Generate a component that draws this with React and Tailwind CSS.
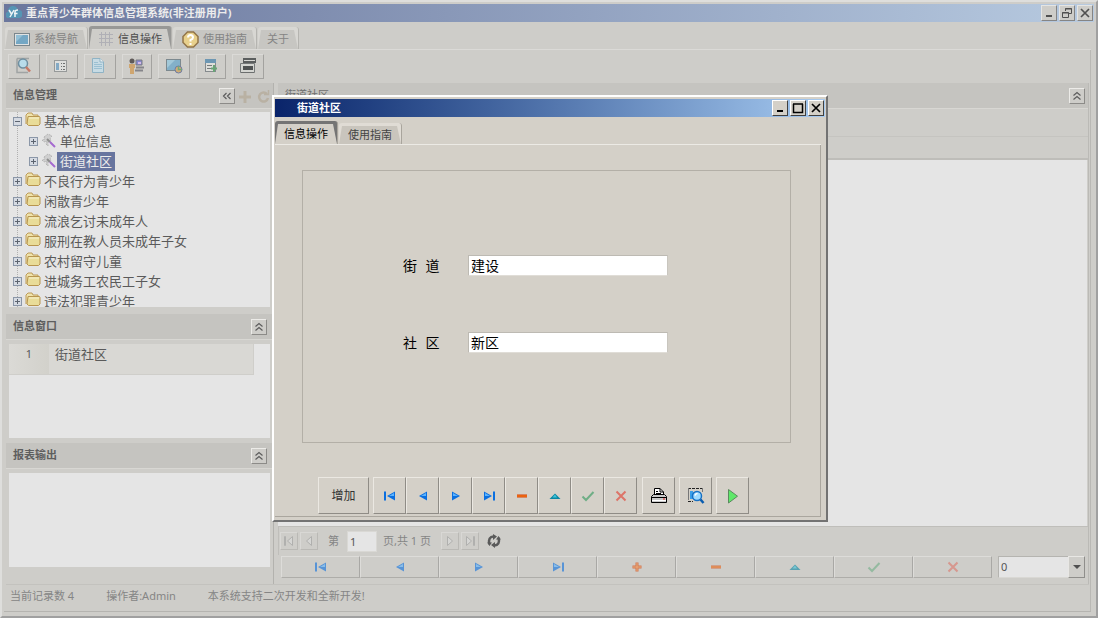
import { useState } from "react";
import clsx from "clsx";

const TREE = [
  { label: "基本信息", level: 0, open: true },
  { label: "单位信息", level: 1 },
  { label: "街道社区", level: 1 },
  { label: "不良行为青少年", level: 0 },
  { label: "闲散青少年", level: 0 },
  { label: "流浪乞讨未成年人", level: 0 },
  { label: "服刑在教人员未成年子女", level: 0 },
  { label: "农村留守儿童", level: 0 },
  { label: "进城务工农民工子女", level: 0 },
  { label: "违法犯罪青少年", level: 0 },
];

const NAV_MAIN = ["first", "prev", "next", "last", "plus", "minus", "up", "check", "cross"];
const NAV_DIALOG = ["first", "prev", "next", "last", "minus", "up", "check", "cross"];

const NAV_LABELS = {
  first: "首记录",
  prev: "上一条",
  next: "下一条",
  last: "末记录",
  plus: "新增",
  minus: "删除",
  up: "编辑",
  check: "保存",
  cross: "取消",
};

function NavIcon({ name }) {
  return (
    <svg width="14" height="14" viewBox="0 0 14 14">
      {name === "first" && (
        <>
          <path d="M1 2.5h2v9H1z" fill="#0a6fe0" />
          <path d="M12 2.5v9L4 7z" fill="#0a6fe0" />
          <path d="M11 4v3H6z" fill="#5cb4ff" />
        </>
      )}
      {name === "prev" && (
        <>
          <path d="M11 2.5v9L3 7z" fill="#0a6fe0" />
          <path d="M10 4v3H5z" fill="#5cb4ff" />
        </>
      )}
      {name === "next" && (
        <>
          <path d="M3 2.5v9L11 7z" fill="#0a6fe0" />
          <path d="M4 4v3h5z" fill="#5cb4ff" />
        </>
      )}
      {name === "last" && (
        <>
          <path d="M11 2.5h2v9h-2z" fill="#0a6fe0" />
          <path d="M2 2.5v9L10 7z" fill="#0a6fe0" />
          <path d="M3 4v3h5z" fill="#5cb4ff" />
        </>
      )}
      {name === "plus" && (
        <>
          <path d="M2.500 5.500h3v-3h3v3h3v3h-3v3h-3v-3h-3z" fill="#d63c00" />
          <path d="M3 7h8M7 3v8" stroke="#ff9a4a" />
        </>
      )}
      {name === "minus" && (
        <>
          <path d="M2 5.500h10v3H2z" fill="#d63c00" />
          <path d="M2 7h10" stroke="#ff8a1e" />
        </>
      )}
      {name === "up" && (
        <>
          <path d="M1.500 10L7 4.500l5.500 5.500z" fill="#0b87a3" />
          <path d="M4.500 8.500L7 5.500l2 3z" fill="#3fc6dc" />
        </>
      )}
      {name === "check" && <path d="M1.500 7.500L5 11L12.500 3" fill="none" stroke="#6fae86" strokeWidth="2" />}
      {name === "cross" && <path d="M2.500 2.500l9 9M11.500 2.500l-9 9" fill="none" stroke="#dd7468" strokeWidth="2" />}
    </svg>
  );
}

function Folder() {
  return (
    <svg width="16" height="15" viewBox="0 0 16 15" className="mb-[3px] shrink-0">
      <path d="M1 12V3l2-2h4l1 2h5v2" fill="#efe3ac" stroke="#bd9b58" />
      <path d="M3 4.500h11.500l.5 1V12l-1.500 1.500h-10L2 12z" fill="#e9dc98" stroke="#b8954f" />
      <path d="M4 6h10" stroke="#f7f1cf" />
    </svg>
  );
}

function Wand() {
  return (
    <svg width="16" height="16" viewBox="0 0 16 16" className="shrink-0">
      <path d="M3 4l4-3 4 2-2 2 1 3-3 1v4l-2-2 1-3-3 1-2-2 3-1z" fill="#cfcfcf" stroke="#b5b5b5" strokeDasharray="2 1" />
      <path d="M6 6l3 3" stroke="#8d8d8d" strokeWidth="2" />
      <path d="M9 9l5 5" stroke="#a56ad0" strokeWidth="2" />
    </svg>
  );
}

function Expander({ open }) {
  return (
    <svg width="9" height="9" viewBox="0 0 9 9" className="shrink-0" shapeRendering="crispEdges">
      <rect x=".5" y=".5" width="8" height="8" fill="#d5dae2" stroke="#8b97a8" />
      <path d={open ? "M2 4.500h5" : "M2 4.500h5M4.500 2v5"} stroke="#5c6470" />
    </svg>
  );
}

function MonitorIcon() {
  return (
    <svg width="16" height="14" viewBox="0 0 16 14">
      <rect x=".5" y=".5" width="15" height="12" fill="#e0e2e2" stroke="#7a868c" />
      <rect x="2" y="2" width="12" height="9" fill="#74a7c4" />
      <path d="M2 2h7L2 9z" fill="#94c0d6" />
    </svg>
  );
}

function GridIcon() {
  return (
    <svg width="16" height="14" viewBox="0 0 16 14" shapeRendering="crispEdges">
      <path
        d="M3.500 0v14M7.500 0v14M11.500 0v14M1 2.500h14M1 6.500h14M1 10.500h14"
        stroke="#b0b0b6"
      />
    </svg>
  );
}

function HelpIcon() {
  return (
    <svg width="17" height="17" viewBox="0 0 17 17">
      <path d="M5.500 1h6L16 5.500v6L11.500 16h-6L1 11.500v-6z" fill="#e8d08c" stroke="#927549" strokeWidth="1.500" />
      <path d="M6 6.500Q6 4 8.500 4T11 6.500Q11 8 8.500 9v1.500" fill="none" stroke="#fff" strokeWidth="2" />
      <path d="M7.500 12h2v2h-2z" fill="#fff" />
    </svg>
  );
}

function ToolIcon({ name }) {
  return (
    <svg width="18" height="18" viewBox="0 0 18 18">
      {name === "search" && (
        <>
          <path d="M2 1.500h12M2 1.500v14h11" fill="none" stroke="#a0a4a4" strokeWidth="1.500" />
          <circle cx="8" cy="6.500" r="4.500" fill="#b9dcea" stroke="#6f8fa0" strokeWidth="1.500" />
          <path d="M11 10l4 4.500" stroke="#c57a68" strokeWidth="2.500" />
        </>
      )}
      {name === "form" && (
        <>
          <rect x="1.500" y="3.500" width="12" height="11" fill="#dedfdd" stroke="#969999" />
          <path d="M3 6h3v7H3z" fill="#83a9c4" />
          <path d="M8 6.500h1M8 9.500h1M8 12.500h1M10 6.500h2M10 9.500h2M10 12.500h2" stroke="#6d7070" />
        </>
      )}
      {name === "page" && (
        <>
          <path d="M1.500 1.500H9L12.500 5v10.500h-11z" fill="#c7dbe4" stroke="#8fb3c5" />
          <path d="M9 1.500V5h3.500" fill="#eef2f4" stroke="#8fb3c5" />
          <path d="M3 5.500h4M3 7.500h8M3 9.500h8M3 11.500h8" stroke="#9bc0d2" />
        </>
      )}
      {name === "user" && (
        <>
          <circle cx="4" cy="4" r="2.500" fill="#5f5a58" />
          <path d="M1 7h6v4H6v6H2v-6H1z" fill="#cfa670" />
          <path d="M8 3h6v5H8z" fill="#8689cf" stroke="#7c7c82" />
          <path d="M8 10.500h8M7 13.500h8" stroke="#85858a" strokeWidth="2" />
          <path d="M10 5h3v2h-3z" fill="#d5b8e6" />
        </>
      )}
      {name === "screen" && (
        <>
          <rect x="1.500" y="2.500" width="14" height="11" fill="#83b0c8" stroke="#7c898f" />
          <path d="M2 3h8L2 11z" fill="#a2c8d8" />
          <circle cx="13.500" cy="12.500" r="3.500" fill="#d1ad76" stroke="#6c7ba6" />
          <path d="M13.500 9v3.500H17" stroke="#72a978" strokeWidth="1.500" fill="none" />
        </>
      )}
      {name === "sheet" && (
        <>
          <rect x="3.500" y="2.500" width="10" height="12" fill="#dededa" stroke="#858a8d" />
          <path d="M3 2h11v4H3z" fill="#6d97b3" />
          <path d="M5 8.500h5M5 11.500h5" stroke="#777b7b" />
          <path d="M12 8v7M9 11.500h6" stroke="#69a476" strokeWidth="2" />
        </>
      )}
      {name === "printer" && (
        <>
          <path d="M4 1h13v5H4z" fill="#5b5e5e" />
          <path d="M5 3.500h11" stroke="#d8d8d4" />
          <path d="M1.500 6.500h14v9h-14z" fill="#d4d5d1" stroke="#777a7a" />
          <path d="M4 9h10v4H4z" fill="#4f5252" />
          <path d="M2 15.500h13" stroke="#6c6e6e" />
        </>
      )}
    </svg>
  );
}

const TOOLS = [
  { name: "search", label: "查询", wide: true },
  { name: "form", label: "表单", wide: true },
  { name: "page", label: "文档", wide: true },
  { name: "user", label: "用户", wide: false },
  { name: "screen", label: "网络", wide: true },
  { name: "sheet", label: "导出", wide: false },
  { name: "printer", label: "打印", wide: true },
];

function Chevrons({ left }) {
  return (
    <svg width="10" height="10" viewBox="0 0 10 10" fill="none" stroke="#5c5c5c" strokeWidth="1.200">
      {left ? <path d="M4.500 2L1.500 5l3 3M8.500 2l-3 3 3 3" /> : <path d="M1.500 4.500L5 1.500l3.500 3M1.500 8.500L5 5.500l3.500 3" />}
    </svg>
  );
}

function ChevronButton({ left, label }) {
  return (
    <button
      type="button"
      aria-label={label}
      className="flex h-4 w-4 items-center justify-center border border-t-[#ecebe8] border-r-[#8c8b88] border-b-[#8c8b88] border-l-[#ecebe8] bg-[#cecdc9]"
    >
      <Chevrons left={left} />
    </button>
  );
}

function PanelHeader({ title, children }) {
  return (
    <div className="flex h-[26px] shrink-0 items-center border-b border-[#d8d7d3] bg-[#c5c4c0] pr-[6px] pl-[7px]">
      <h2 className="flex-1 text-[11px] font-bold text-[#5e5e5e]">{title}</h2>
      {children}
    </div>
  );
}

function Tab({ active, dialog, icon, children }) {
  return (
    <button
      type="button"
      role="tab"
      aria-selected={active}
      className={clsx(
        "rounded-t-[3px] border-r pt-[3px] text-[11px]",
        dialog ? "border-[#a9a59d]" : "border-[#b5b4b0]",
        active && dialog && "h-[23px] bg-[#747474] text-black",
        active && !dialog && "h-[23px] bg-[#989896] text-[#4c4c4c]",
        !active && dialog && "h-[21px] bg-[#e0dcd5] text-[#444]",
        !active && !dialog && "h-[22px] bg-[#d8d7d3] text-[#848484]",
      )}
    >
      <span
        className={clsx(
          "flex h-full items-center gap-1 px-[9px] [clip-path:polygon(3px_0,calc(100%-4px)_0,100%_100%,0_100%)]",
          active && dialog && "bg-[#d4d0c8]",
          active && !dialog && "bg-[#cecdc9]",
          !active && dialog && "bg-[#c9c5bd]",
          !active && !dialog && "bg-[#c7c6c2]",
        )}
      >
        {icon}
        {children}
      </span>
    </button>
  );
}

function CaptionButton({ kind, dim }) {
  return (
    <button
      type="button"
      aria-label={kind}
      className={clsx(
        "flex h-4 w-4 items-center justify-center border",
        dim
          ? "border-t-[#e5e5e3] border-r-[#858585] border-b-[#858585] border-l-[#e5e5e3] bg-[#cecdc9] text-[#505050]"
          : "border-t-white border-r-[#404040] border-b-[#404040] border-l-white bg-[#d4d0c8] text-black",
      )}
    >
      <svg width="12" height="12" viewBox="0 0 12 12" fill="none" stroke="currentColor">
        {kind === "minimize" && <path d="M3 9h6" strokeWidth="2" />}
        {kind === "maximize" && <path d="M1.500 2v8.500h9V2M1 2h10" strokeWidth="1.500" />}
        {kind === "restore" && <path d="M4.500 4V1.500h6v5H8M4 2h7M1.500 5.500h6v5h-6zM1 6h7" />}
        {kind === "close" && <path d="M2 2l8 8M10 2l-8 8" strokeWidth="1.700" />}
      </svg>
    </button>
  );
}

function TreePanel({ selected, onSelect }) {
  return (
    <ul className="relative mx-[3px] mt-[3px] min-h-0 flex-1 overflow-hidden bg-[#e5e5e5] text-[13px] text-[#5a5a5a]">
      <li className="absolute top-0 left-2 h-full border-l border-dotted border-[#b0b0b0]" aria-hidden="true" />
      {TREE.map((node) => (
        <li
          key={node.label}
          className={clsx("relative flex h-5 items-center gap-[3px] pb-[2px]", node.level ? "pl-5" : "pl-1")}
        >
          <Expander open={node.open} />
          {node.level ? <Wand /> : <Folder />}
          <button
            type="button"
            onClick={() => onSelect(node.label)}
            className={clsx(
              "h-[19px] leading-[19px]",
              node.level && "-ml-[3px] px-[3px]",
              selected === node.label && "bg-[#68759f] text-[#ececec]",
            )}
          >
            {node.label}
          </button>
        </li>
      ))}
    </ul>
  );
}

function Sidebar() {
  const [selected, setSelected] = useState("街道社区");

  return (
    <aside className="flex w-[268px] shrink-0 flex-col border-r border-[#b3b2ae] pb-[17px]">
      <PanelHeader title="信息管理">
        <ChevronButton left label="折叠" />
        <svg width="36" height="16" viewBox="0 0 36 16" className="-mr-1" fill="none" stroke="#b9b1a3">
          <path d="M4 9h12M10 3v12" strokeWidth="3" />
          <path d="M32 6a4.500 4.500 0 1 0 1 4" strokeWidth="2.500" />
          <path d="M29 6.500h4.500V2" strokeWidth="1.500" />
        </svg>
      </PanelHeader>
      <TreePanel selected={selected} onSelect={setSelected} />

      <div className="mt-[7px] mb-1">
        <PanelHeader title="信息窗口">
          <ChevronButton label="收起信息窗口" />
        </PanelHeader>
      </div>
      <div className="mx-[3px] h-[94px] shrink-0 bg-[#e5e5e5] pr-4">
        <table className="w-full border-r border-b border-[#cfceca] text-[#5a5a5a]">
          <tbody>
            <tr className="h-[30px] bg-[#d9d8d4] align-top">
              <td className="w-10 bg-gradient-to-r from-[#dbdad6] to-[#d2d1cb] pt-[2px] text-center text-[11px]">1</td>
              <td className="pl-[6px] text-[13px] leading-[20px]">{selected}</td>
            </tr>
          </tbody>
        </table>
      </div>

      <div className="mt-[5px] mb-1">
        <PanelHeader title="报表输出">
          <ChevronButton label="收起报表输出" />
        </PanelHeader>
      </div>
      <div className="mx-[3px] h-[94px] shrink-0 bg-[#e5e5e5]" />
    </aside>
  );
}

function PagerButton({ name, label }) {
  return (
    <button
      type="button"
      aria-label={label}
      className="flex h-[18px] w-[18px] items-center justify-center border border-t-[#d9d8d5] border-r-[#bab9b5] border-b-[#bab9b5] border-l-[#d9d8d5]"
    >
      <svg width="12" height="12" viewBox="0 0 12 12" fill="#d6d6d4" stroke="#b0b0ae">
        {name === "first" && <path d="M1.500 1.500h1v9h-1zM9.500 1.500v9L4.500 6z" />}
        {name === "prev" && <path d="M8.500 1.500v9L3.500 6z" />}
        {name === "next" && <path d="M3.500 1.500v9l5-4.500z" />}
        {name === "last" && <path d="M9.500 1.500h1v9h-1zM2.500 1.500v9l5-4.500z" />}
      </svg>
    </button>
  );
}

function Pager() {
  return (
    <div className="flex h-[29px] items-center border-t border-l border-[#bfbeba] pl-px text-[11px] text-[#858585]">
      <div className="flex gap-[2px]">
        <PagerButton name="first" label="首页" />
        <PagerButton name="prev" label="上一页" />
      </div>
      <label htmlFor="page" className="ml-[10px]">
        第
      </label>
      <input
        id="page"
        defaultValue="1"
        className="mr-[6px] ml-2 h-[21px] w-[30px] border border-[#d9d8d4] bg-[#e5e5e5] px-[2px] text-[11px] text-[#555]"
      />
      <span>页,共 1 页</span>
      <div className="ml-[10px] flex gap-[2px]">
        <PagerButton name="next" label="下一页" />
        <PagerButton name="last" label="尾页" />
      </div>
      <button type="button" aria-label="刷新" className="ml-2">
        <svg width="14" height="14" viewBox="0 0 14 14" fill="none" stroke="#5a5a5a" strokeWidth="2.500">
          <path d="M6.500 2.500C3 2.500 1 5.500 2.500 10" />
          <path d="M7.500 11.500c3.500 0 5.500-3 4-7.500" />
          <path d="M6 0v6l4-3.500zM8 8v6l-4-3zM0 8.500h5L2.500 12zM9 5.500h5L11.500 2z" fill="#5a5a5a" stroke="none" />
        </svg>
      </button>
    </div>
  );
}

function MainPanel() {
  return (
    <main className="ml-1 flex min-w-0 flex-1 flex-col border-r border-[#bbbab6]">
      <div className="flex h-[26px] shrink-0 items-center border-b border-[#d8d7d3] bg-[#c5c4c0] pr-[3px] pl-[7px]">
        <h2 className="flex-1 text-[11px] text-[#6e6e6e]">街道社区</h2>
        <ChevronButton label="收起" />
      </div>
      <div className="h-7 shrink-0 border-b border-[#c5c4c0]" />
      <div className="h-[23px] shrink-0 border-b-2 border-[#bebdb9]" />
      <div className="mr-px min-h-0 flex-1 bg-[#e5e5e5]" />
      <Pager />
      <div className="mt-px mb-[6px] flex h-[22px] gap-[6px] pr-[3px] pl-[3px]">
        <div className="flex flex-1">
          {NAV_MAIN.map((name) => (
            <button
              key={name}
              type="button"
              aria-label={NAV_LABELS[name]}
              className="flex flex-1 items-center justify-center border border-t-[#dddcd9] border-r-[#a9a8a5] border-b-[#aeada9] border-l-[#dddcd9]"
            >
              <span className="opacity-60">
                <NavIcon name={name} />
              </span>
            </button>
          ))}
        </div>
        <div className="relative w-[87px]">
          <select
            aria-label="记录"
            className="block h-full w-full appearance-none border border-t-[#b5b4b0] border-r-[#d9d8d4] border-b-[#d9d8d4] border-l-[#b5b4b0] bg-[#e5e5e5] px-[2px] text-[11px] text-[#555]"
          >
            <option>0</option>
          </select>
          <span className="pointer-events-none absolute inset-y-0 right-0 flex w-[17px] items-center justify-center border border-t-[#e8e7e4] border-r-[#8f8e8b] border-b-[#8f8e8b] border-l-[#e8e7e4] bg-[#cecdc9]">
            <svg width="8" height="4" viewBox="0 0 8 4">
              <path d="M0 0h8L4 4z" fill="#505050" />
            </svg>
          </span>
        </div>
      </div>
    </main>
  );
}

function DialogButton({ children, label, className }) {
  return (
    <button
      type="button"
      aria-label={label}
      className={clsx(
        "flex h-[37px] items-center justify-center border border-t-[#ebe8e2] border-r-[#8f8c86] border-b-[#8f8c86] border-l-[#ebe8e2] text-[12px] text-[#333]",
        className ?? "w-[33px]",
      )}
    >
      {children}
    </button>
  );
}

function Field({ id, label, value }) {
  return (
    <div className="flex items-center font-['Liberation_Mono','Noto_Sans_CJK_SC',monospace]">
      <label htmlFor={id} className="w-[65px] pt-1 text-[14px] leading-5 text-black">
        {label}
      </label>
      <input
        id={id}
        defaultValue={value}
        className="h-[21px] w-[200px] border border-t-[#bdbab3] border-r-[#c9c6bf] border-b-[#e0ddd7] border-l-[#bdbab3] bg-white px-[2px] text-[14px] leading-[18px] text-black"
      />
    </div>
  );
}

function CommunityDialog() {
  return (
    <div
      role="dialog"
      aria-label="街道社区"
      className="absolute top-[93px] left-[270px] flex h-[427px] w-[556px] flex-col border-t-2 border-r-2 border-b-2 border-l-2 border-t-white border-r-[#737373] border-b-[#737373] border-l-white bg-[#d4d0c8] px-px pt-[2px]"
    >
      <div className="flex h-[18px] shrink-0 items-center gap-[2px] bg-gradient-to-r from-[#0a246a] to-[#a6caf0] pr-px pl-[22px]">
        <h1 className="flex-1 text-[11px] font-bold text-white">街道社区</h1>
        <CaptionButton kind="minimize" />
        <CaptionButton kind="maximize" />
        <CaptionButton kind="close" />
      </div>

      <div role="tablist" className="mt-1 mr-1 flex shrink-0 items-end gap-px border-b border-[#eceae5]">
        <Tab dialog active>
          信息操作
        </Tab>
        <Tab dialog>使用指南</Tab>
      </div>

      <div className="mr-1 mb-[3px] flex min-h-0 flex-1 flex-col border-r border-b border-[#aaa69e] pb-[2px]">
        <form className="mt-[25px] mr-[29px] ml-[27px] flex h-[273px] flex-col gap-[53px] border border-[#b3afa7] pt-[82px] pl-[100px]">
          <Field id="street" label="街 道" value="建设" />
          <Field id="community" label="社 区" value="新区" />
        </form>

        <div className="mt-auto flex pl-[43px]">
          <DialogButton className="mr-1 w-[51px]">增加</DialogButton>
          {NAV_DIALOG.map((name) => (
            <DialogButton key={name} label={NAV_LABELS[name]}>
              <NavIcon name={name} />
            </DialogButton>
          ))}
          <div className="ml-[5px] flex gap-1">
            <DialogButton label="打印">
              <svg width="18" height="18" viewBox="0 0 18 18" fill="none" stroke="#000">
                <path d="M4.500 8V1.500H10L13.500 5v3" fill="#fff" />
                <path d="M10 1.500V5h3.500M6 4.500h2M6 6.500h5" />
                <path d="M3.500 7.500h11l2 2v6h-15v-6z" fill="#c9c9c9" />
                <path d="M2 10.500h14" />
                <path d="M2 13.500h14" stroke="#fff" />
                <path d="M13 12h2" stroke="#e02020" />
              </svg>
            </DialogButton>
            <DialogButton label="预览">
              <svg width="18" height="18" viewBox="0 0 18 18" fill="none">
                <path d="M1 1.500h15M1 14.500h5" stroke="#222" strokeDasharray="3 1" />
                <path d="M1.500 1v12M15.500 1v4" stroke="#777" />
                <path d="M3 4h3v8H3z" fill="#3a9fe8" />
                <circle cx="10" cy="9" r="4.500" fill="#9fdcff" stroke="#1670c4" strokeWidth="1.500" />
                <path d="M8 8.500q.5-2 2.500-2" stroke="#fff" strokeWidth="1.500" />
                <path d="M13.500 12.500l3 3.500" stroke="#0a5db0" strokeWidth="2.500" />
              </svg>
            </DialogButton>
            <DialogButton label="执行">
              <svg width="12" height="16" viewBox="0 0 12 16">
                <path d="M1.500 1.500V15L10.500 8.200z" fill="#5fe86a" stroke="#5a8a5e" />
              </svg>
            </DialogButton>
          </div>
        </div>
      </div>
    </div>
  );
}

export default function App() {
  return (
    <div className="relative flex h-screen flex-col overflow-hidden border-2 border-t-[#dededc] border-r-[#a0a0a0] border-b-[#a0a0a0] border-l-[#dededc] bg-[#cecdc9] px-[2px] pt-[2px] pb-1 font-['Noto_Sans','Noto_Sans_CJK_SC',sans-serif]">
      <header className="flex h-[18px] shrink-0 items-center gap-[2px] bg-gradient-to-r from-[#6b779d] to-[#b7cae0] pr-px pl-[2px]">
        <svg width="16" height="16" viewBox="0 0 16 16">
          <path d="M3 13a3 3 0 0 1-1-6 5 5 0 0 1 10-2 4 4 0 0 1 1 8z" fill="#5595b4" />
          <path d="M3 5l2.500 4M8 5l-4 7M9 12V7q0-2 3-2M8 8.500h3.500" fill="none" stroke="#eef4f6" strokeWidth="1.500" />
        </svg>
        <h1 className="flex-1 pl-[2px] text-[11px] font-bold text-[#ececec]">重点青少年群体信息管理系统(非注册用户)</h1>
        <CaptionButton kind="minimize" dim />
        <CaptionButton kind="restore" dim />
        <CaptionButton kind="close" dim />
      </header>

      <nav role="tablist" className="mr-[3px] flex h-7 shrink-0 items-end gap-px border-b border-[#dbdad7] pl-px">
        <Tab icon={<MonitorIcon />}>系统导航</Tab>
        <Tab active icon={<GridIcon />}>
          信息操作
        </Tab>
        <Tab icon={<HelpIcon />}>使用指南</Tab>
        <Tab>关于</Tab>
      </nav>

      <div className="mr-[3px] flex min-h-0 flex-1 flex-col border-r border-[#b9b8b4] pr-px pl-[2px]">
        <div className="flex h-[33px] shrink-0 items-center gap-[6px] pb-px pl-[2px]">
          {TOOLS.map((tool) => (
            <button
              key={tool.name}
              type="button"
              aria-label={tool.label}
              className={clsx(
                "flex h-[25px] items-center justify-center border border-t-[#dbdad7] border-r-[#a3a29f] border-b-[#a3a29f] border-l-[#dbdad7]",
                tool.wide ? "w-8" : "w-[30px]",
              )}
            >
              <ToolIcon name={tool.name} />
            </button>
          ))}
        </div>

        <div className="flex min-h-0 flex-1">
          <Sidebar />
          <MainPanel />
        </div>

        <footer className="flex h-[27px] shrink-0 items-center gap-8 border-t border-[#c3c2be] pb-[3px] pl-1 text-[11px] text-[#858585]">
          <span>当前记录数 4</span>
          <span>操作者:Admin</span>
          <span>本系统支持二次开发和全新开发!</span>
        </footer>
      </div>
      <div className="mr-[3px] shrink-0 border-t border-[#b5b4b0]" />

      <CommunityDialog />
    </div>
  );
}
